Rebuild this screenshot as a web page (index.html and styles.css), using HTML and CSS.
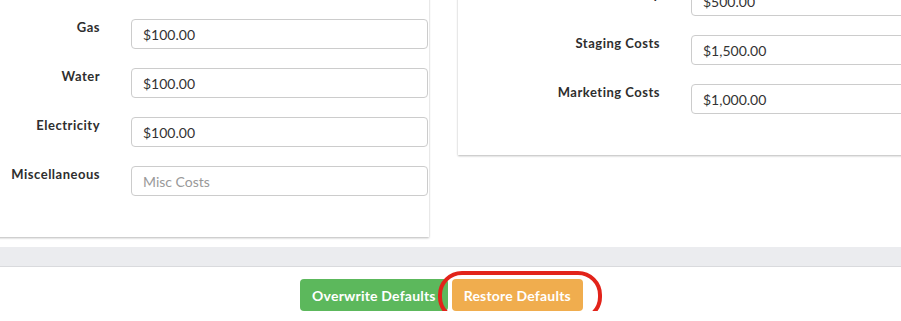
FILE: index.html
```html
<!DOCTYPE html>
<html lang="en">
<head>
  <meta charset="UTF-8" />
  <meta name="viewport" content="width=device-width, initial-scale=1.0"/>
  <title>Deal Costs</title>
  <link rel="stylesheet" href="styles.css">
</head>
<body>

  <div class="content">
    <div class="cards">
      <div class="card card-left">
        <div class="row">
          <label for="gas">Gas</label>
          <input type="text" id="gas" value="$100.00">
        </div>
        <div class="row">
          <label for="water">Water</label>
          <input type="text" id="water" value="$100.00">
        </div>
        <div class="row">
          <label for="electricity">Electricity</label>
          <input type="text" id="electricity" value="$100.00">
        </div>
        <div class="row">
          <label for="misc">Miscellaneous</label>
          <input type="text" id="misc" placeholder="Misc Costs">
        </div>
      </div>

      <div class="card card-right">
        <div class="row">
          <label for="warranty">Home Warranty</label>
          <input type="text" id="warranty" value="$500.00">
        </div>
        <div class="row">
          <label for="staging">Staging Costs</label>
          <input type="text" id="staging" value="$1,500.00">
        </div>
        <div class="row">
          <label for="marketing">Marketing Costs</label>
          <input type="text" id="marketing" value="$1,000.00">
        </div>
      </div>
    </div>
  </div>

  <div class="band"></div>

  <footer class="actions">
    <button type="button" class="btn btn-green">Overwrite Defaults</button>
    <span class="highlight">
      <button type="button" class="btn btn-orange">Restore Defaults</button>
      <span class="ring"></span>
    </span>
  </footer>

</body>
</html>
```

FILE: styles.css
```css
body {
  font-family: Lato, "Open Sans", Arial, sans-serif;
  margin: 0;
  padding: 0;
  background-color: white;
  color: #333;
  overflow: hidden;
}

.content {
  background-color: white;
  padding-bottom: 10px;
}

.cards {
  display: flex;
  align-items: flex-start;
  gap: 29px;
  margin: -60px -40px 0 -20px;
}

.card {
  background-color: white;
  box-shadow: 0 1px 2px rgba(0, 0, 0, 0.28);
  display: flex;
  flex-direction: column;
  gap: 19px;
  padding-bottom: 41px;
}

.card-left {
  width: 434px;
  padding-top: 79px;
  padding-left: 14px;
  padding-right: 1px;
}

.card-right {
  flex: 1;
  padding-top: 46px;
  padding-left: 15px;
}

.row {
  display: grid;
  column-gap: 31px;
  align-items: start;
}

.card-left .row {
  grid-template-columns: 106px 1fr;
}

.card-right .row {
  grid-template-columns: 187px 1fr;
}

.row label {
  text-align: right;
  font-weight: bold;
  font-size: 13px;
  letter-spacing: 0.5px;
  line-height: 16px;
  color: #2e2e2e;
}

.row input {
  box-sizing: border-box;
  height: 30px;
  width: 100%;
  padding: 0 11px;
  border: 1px solid #ccc;
  border-radius: 4px;
  font-family: inherit;
  font-size: 14px;
  color: #333;
}

.row input::placeholder {
  color: #999;
}

.band {
  height: 19px;
  background-color: #ebecef;
  border-bottom: 1px solid #d9dadd;
}

.actions {
  display: flex;
  justify-content: center;
  align-items: flex-start;
  gap: 4px;
  padding: 12px 18px 0 0;
}

.btn {
  height: 32px;
  padding: 0 12px;
  border: none;
  border-radius: 4px;
  color: white;
  font-family: inherit;
  font-weight: bold;
  font-size: 14px;
  letter-spacing: 0.2px;
  cursor: pointer;
}

.btn-green {
  background-color: #5cb85c;
}

.btn-orange {
  background-color: #f0ad4e;
}

.highlight {
  position: relative;
  display: inline-block;
}

.highlight .btn {
  display: block;
}

.ring {
  position: absolute;
  top: -8px;
  bottom: -10px;
  left: -14px;
  right: -19px;
  border: 4px solid #e2231a;
  border-radius: 24px;
  pointer-events: none;
}
```
